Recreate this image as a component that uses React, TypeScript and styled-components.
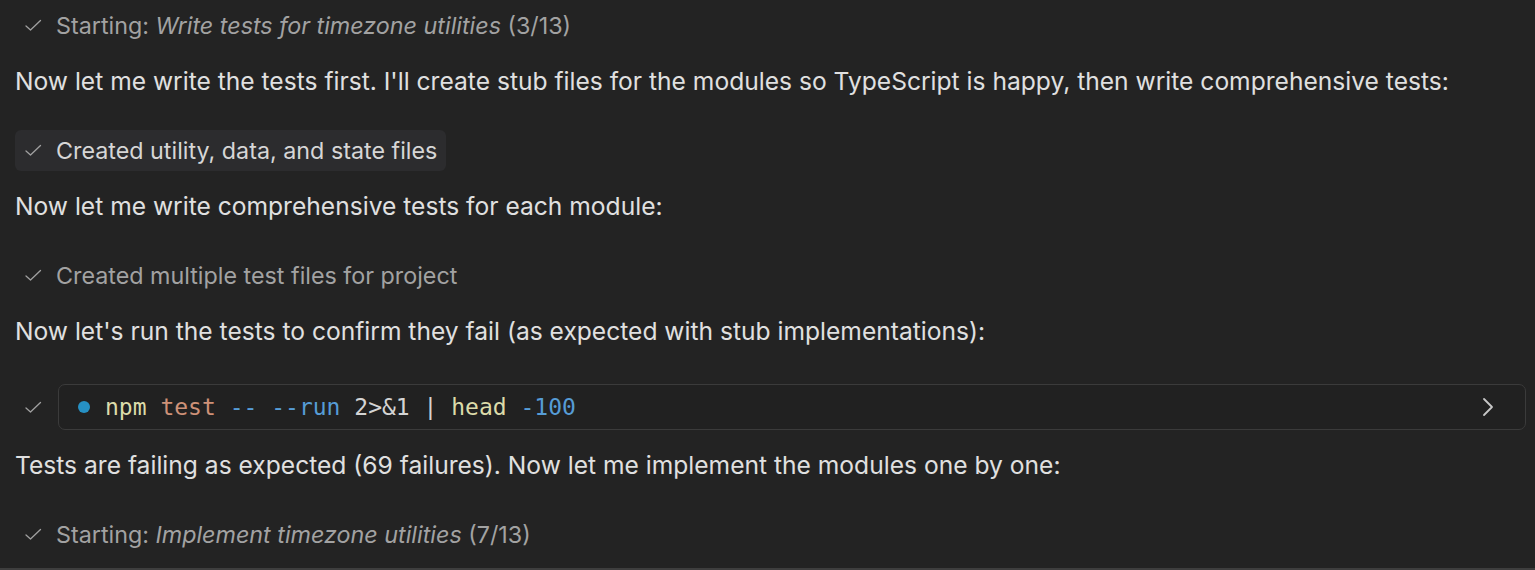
import React from 'react'
import styled, { createGlobalStyle } from 'styled-components'

const GlobalStyle = createGlobalStyle`
  html, body {
    margin: 0;
    padding: 0;
    background: #232323;
  }
`

const Page = styled.div`
  box-sizing: border-box;
  height: 570px;
  padding: 5px 9px 0 15px;
  display: flex;
  flex-direction: column;
  background: #232323;
  border-bottom: 2px solid #3e3e3e;
  font-family: Inter, 'Noto Sans', sans-serif;
  overflow: hidden;
`

type StepProps = {
  readonly highlighted?: boolean
}

const Step = styled.div<StepProps>`
  align-self: flex-start;
  height: 41px;
  display: flex;
  align-items: center;
  gap: 14px;
  padding: 0 9px 0 10px;
  border-radius: 6px;
  background: ${props => (props.highlighted ? '#2c2c2e' : 'transparent')};
  color: ${props => (props.highlighted ? '#d6d6d6' : '#a2a2a2')};
  font-size: 23.3px;
  white-space: nowrap;
`

const Task = styled.em`
  font-style: italic;
`

const Paragraph = styled.p`
  margin: 20px 0 34px;
  line-height: 30px;
  font-size: 24.6px;
  color: #e0e0e0;
  white-space: nowrap;
`

const TerminalRow = styled.div`
  display: flex;
  align-items: center;
  gap: 16px;
  padding-left: 10px;
  margin-top: 4px;
`

const Terminal = styled.div`
  flex: 1;
  height: 46px;
  box-sizing: border-box;
  display: flex;
  align-items: center;
  padding: 0 30px 0 19px;
  border: 1.5px solid #3b3b3b;
  border-radius: 7px;
  background: #212121;
`

const Dot = styled.span`
  width: 12px;
  height: 12px;
  border-radius: 50%;
  background: #2690c3;
  margin-right: 15px;
  flex-shrink: 0;
`

const Command = styled.code`
  flex: 1;
  font-family: 'DejaVu Sans Mono', 'Liberation Mono', monospace;
  font-size: 23px;
  color: #d4d4d4;
  white-space: pre;
`

type TokenProps = {
  readonly kind: 'fn' | 'str' | 'flag' | 'plain'
}

const tokenColors = {
  fn: '#dcdcaa',
  str: '#ce9178',
  flag: '#569cd6',
  plain: '#d4d4d4',
}

const Token = styled.span<TokenProps>`
  color: ${props => tokenColors[props.kind]};
`

const CheckIcon = () => (
  <svg width="17" height="17" viewBox="0 0 17 17" fill="none">
    <path
      d="M1 9 L5.5 13 L15.5 3.5"
      stroke="#a0a0a0"
      strokeWidth="1.3"
      strokeLinecap="round"
      strokeLinejoin="round"
    />
  </svg>
)

const ChevronIcon = () => (
  <svg width="14" height="22" viewBox="0 0 14 22" fill="none">
    <path
      d="M3 3 L11 11 L3 19"
      stroke="#c8c8c8"
      strokeWidth="1.8"
      strokeLinecap="round"
      strokeLinejoin="round"
    />
  </svg>
)

const App = () => {
  return (
    <>
      <GlobalStyle />
      <Page>
        <Step>
          <CheckIcon />
          <span>
            Starting: <Task>Write tests for timezone utilities</Task> (3/13)
          </span>
        </Step>
        <Paragraph>
          Now let me write the tests first. I'll create stub files for the
          modules so TypeScript is happy, then write comprehensive tests:
        </Paragraph>
        <Step highlighted>
          <CheckIcon />
          <span>Created utility, data, and state files</span>
        </Step>
        <Paragraph>Now let me write comprehensive tests for each module:</Paragraph>
        <Step>
          <CheckIcon />
          <span>Created multiple test files for project</span>
        </Step>
        <Paragraph>
          Now let's run the tests to confirm they fail (as expected with stub
          implementations):
        </Paragraph>
        <TerminalRow>
          <CheckIcon />
          <Terminal>
            <Dot />
            <Command>
              <Token kind="fn">npm</Token> <Token kind="str">test</Token>{' '}
              <Token kind="flag">-- --run</Token> <Token kind="plain">2&gt;&amp;1 | </Token>
              <Token kind="fn">head</Token> <Token kind="flag">-100</Token>
            </Command>
            <ChevronIcon />
          </Terminal>
        </TerminalRow>
        <Paragraph>
          Tests are failing as expected (69 failures). Now let me implement the
          modules one by one:
        </Paragraph>
        <Step>
          <CheckIcon />
          <span>
            Starting: <Task>Implement timezone utilities</Task> (7/13)
          </span>
        </Step>
      </Page>
    </>
  )
}

export default App
